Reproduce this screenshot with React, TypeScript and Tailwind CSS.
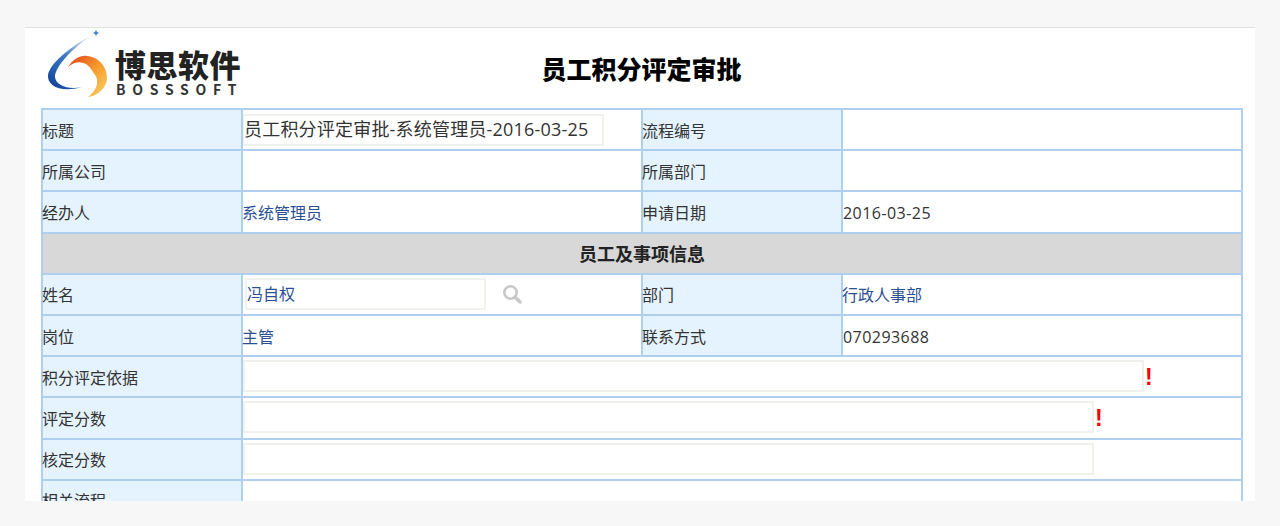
const labelCls = "bg-[#e5f3fe] text-[#333] align-middle indent-[-1px]";
const cellCls = "align-middle text-[#333] indent-[-1px]";
const linkCls = "text-[#2b4f94]";
const inputCls = "block h-[32px] mb-[3px] border-2 border-[#f0f0ec] bg-white";

function Logo() {
  return (
    <div className="flex items-start w-[200px] h-[72px]">
      <svg width="64" height="70" viewBox="0 0 64 70" className="shrink-0">
        <defs>
          <linearGradient id="blue" x1="0.8" y1="0" x2="0.2" y2="1">
            <stop offset="0" stopColor="#dbe8f5" />
            <stop offset="0.45" stopColor="#3f7cc4" />
            <stop offset="1" stopColor="#12469c" />
          </linearGradient>
          <linearGradient id="sun" x1="0" y1="0" x2="1" y2="1">
            <stop offset="0" stopColor="#e2401a" />
            <stop offset="0.5" stopColor="#f59a2c" />
            <stop offset="1" stopColor="#fbd468" />
          </linearGradient>
        </defs>
        <path d="M45 5 C28 14 3 32 1 45 C0 56 14 63 35 57 C22 60 9 56 8 47 C8 36 28 16 45 5 Z" fill="url(#blue)" />
        <path d="M21 37 C27 28 34 25 40 26 C52 27 60 37 60 48 C60 58 50 66 41 67 C47 62 50 57 50 53 C51 47 47 44 46 42 C43 36 38 33 36 33 C31 31 26 33 21 37 Z" fill="url(#sun)" />
        <path d="M49 0 L50 2 L52 3 L50 4 L49 6 L48 4 L46 3 L48 2 Z" fill="#3f7cc4" />
      </svg>
      <div className="flex flex-col ml-[4px] mt-[18px] font-['Noto_Sans_CJK_SC',sans-serif] text-[#222]">
        <span className="text-[31px] leading-[32px] font-black tracking-[0.5px] whitespace-nowrap">博思软件</span>
        <span className="text-[14px] leading-[17px] mt-[1px] ml-[1px] font-bold tracking-[6.7px] text-[#333] whitespace-nowrap">BOSSSOFT</span>
      </div>
    </div>
  );
}

function Bang() {
  return <span className="mb-[1px] ml-[2px] font-['Liberation_Sans',sans-serif] text-[23px] leading-none font-bold text-[#f00]">!</span>;
}

function Num({ children }: { children: string }) {
  return <span className="ml-[1px] tracking-[0.45px]">{children}</span>;
}

export default function App() {
  return (
    <div className="h-[526px] bg-[#f7f7f7] pt-[27px] px-[25px] font-['Open_Sans','Noto_Sans_CJK_SC',sans-serif] text-[16px]">
      <div className="h-[474px] bg-white border-t border-[#e0e0e0] overflow-hidden px-[17px] relative">
        <div className="flex h-[80px] pt-[2px] relative">
          <div className="ml-[5px]">
            <Logo />
          </div>
          <h1 className="absolute left-[3px] right-0 top-[23px] text-center text-[25px] leading-[36px] font-black text-black">
            员工积分评定审批
          </h1>
        </div>
        <table className="-ml-[1px] w-[1202px] max-w-none table-fixed border-collapse [&_td]:border-2 [&_td]:border-[#aed0ee] [&_td]:h-[41.2px] [&_td]:p-0 [&_td]:pt-[2px]">
          <colgroup>
            <col className="w-[200px]" />
            <col className="w-[400px]" />
            <col className="w-[200px]" />
            <col className="w-[400px]" />
          </colgroup>
          <tbody>
            <tr>
              <td className={labelCls}>标题</td>
              <td className={cellCls}>
                <div className="flex items-center h-[32px] mb-[2px] w-[362px] border-2 border-[#f0f0ec] text-[18px] text-[#333] indent-0 -ml-[1px] whitespace-nowrap">
                  <span className="tracking-[0.2px]">员工积分评定审批-系统管理员-2016-03-25</span>
                </div>
              </td>
              <td className={labelCls}>流程编号</td>
              <td className={cellCls}></td>
            </tr>
            <tr>
              <td className={labelCls}>所属公司</td>
              <td className={cellCls}></td>
              <td className={labelCls}>所属部门</td>
              <td className={cellCls}></td>
            </tr>
            <tr>
              <td className={labelCls}>经办人</td>
              <td className={cellCls}><span className={linkCls}>系统管理员</span></td>
              <td className={labelCls}>申请日期</td>
              <td className={cellCls}><Num>2016-03-25</Num></td>
            </tr>
            <tr>
              <td colSpan={4} className="bg-[#d8d8d8] text-center align-middle text-[18px] font-bold text-[#222]">
                员工及事项信息
              </td>
            </tr>
            <tr>
              <td className={labelCls}>姓名</td>
              <td className={cellCls}>
                <div className="flex items-center mb-[3px]">
                  <div className={`flex items-center w-[241px] h-[32px] ml-[2px] border-2 border-[#f0f0ec] indent-0 ${linkCls}`}>冯自权</div>
                  <svg width="20" height="20" viewBox="0 0 20 20" className="ml-[16px]">
                    <circle cx="8.5" cy="8.5" r="6.2" fill="none" stroke="#c8c8c8" strokeWidth="2.6" />
                    <path d="M13 13 L18 18" stroke="#c8c8c8" strokeWidth="3.4" strokeLinecap="round" />
                  </svg>
                </div>
              </td>
              <td className={labelCls}>部门</td>
              <td className={cellCls}><span className={linkCls}>行政人事部</span></td>
            </tr>
            <tr>
              <td className={labelCls}>岗位</td>
              <td className={cellCls}><span className={linkCls}>主管</span></td>
              <td className={labelCls}>联系方式</td>
              <td className={cellCls}><Num>070293688</Num></td>
            </tr>
            <tr>
              <td className={labelCls}>积分评定依据</td>
              <td colSpan={3} className={cellCls}>
                <div className="flex items-center">
                  <div className={`${inputCls} w-[901px]`}></div>
                  <Bang />
                </div>
              </td>
            </tr>
            <tr>
              <td className={labelCls}>评定分数</td>
              <td colSpan={3} className={cellCls}>
                <div className="flex items-center">
                  <div className={`${inputCls} w-[851px]`}></div>
                  <Bang />
                </div>
              </td>
            </tr>
            <tr>
              <td className={labelCls}>核定分数</td>
              <td colSpan={3} className={cellCls}>
                <div className={`${inputCls} w-[851px]`}></div>
              </td>
            </tr>
            <tr>
              <td className={labelCls}>相关流程</td>
              <td colSpan={3} className={cellCls}></td>
            </tr>
          </tbody>
        </table>
      </div>
    </div>
  );
}
